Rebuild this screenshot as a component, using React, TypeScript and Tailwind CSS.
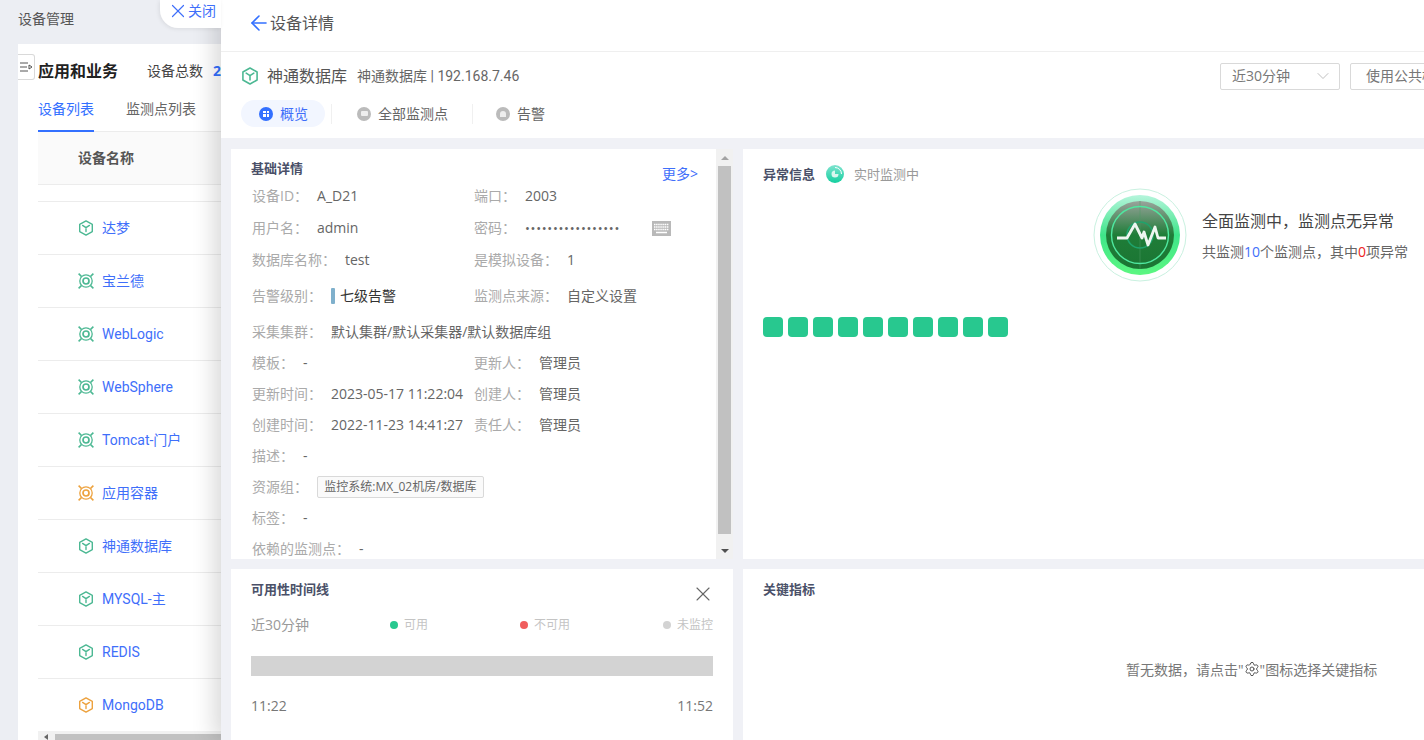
import { ArrowLeft, ChevronDown, Settings, X } from "lucide-react";

const DEVICES = [
  { name: "达梦", icon: "box", color: "#4cb893" },
  { name: "宝兰德", icon: "gear", color: "#4cb893" },
  { name: "WebLogic", icon: "gear", color: "#4cb893" },
  { name: "WebSphere", icon: "gear", color: "#4cb893" },
  { name: "Tomcat-门户", icon: "gear", color: "#4cb893" },
  { name: "应用容器", icon: "gear", color: "#eda23e" },
  { name: "神通数据库", icon: "box", color: "#4cb893" },
  { name: "MYSQL-主", icon: "box", color: "#4cb893" },
  { name: "REDIS", icon: "box", color: "#4cb893" },
  { name: "MongoDB", icon: "box", color: "#eda23e" },
];

function BoxIcon({ color, size = 16 }: { color: string; size?: number }) {
  return (
    <svg width={size} height={size} viewBox="0 0 16 16" fill="none" stroke={color} strokeWidth="1.4" className="shrink-0">
      <path d="M8 .9 14.3 4.4V11.6L8 15.1 1.7 11.6V4.4Z" strokeLinejoin="round" />
      <path d="M4.6 5.4 8 7.7l3.4-2.3M8 7.7v3.8" strokeLinecap="round" />
    </svg>
  );
}

function GearIcon({ color }: { color: string }) {
  return (
    <svg width="16" height="16" viewBox="0 0 16 16" fill="none" stroke={color} className="shrink-0">
      <circle cx="8" cy="8" r="6.2" strokeWidth="1.3" />
      <path d="M.6.6 3.4 3.4M15.4.6 12.6 3.4M.6 15.4 3.400 12.600M15.400 15.400 12.600 12.600" strokeWidth="1.500" />
      <circle cx="8" cy="8" r="3" strokeWidth="1.7" />
    </svg>
  );
}

function Radar() {
  return (
    <svg width="94" height="94" viewBox="0 0 94 94" className="shrink-0">
      <defs>
        <linearGradient id="disk" x1="0" y1="0" x2="0" y2="1">
          <stop offset="0" stopColor="#b5f5dc" />
          <stop offset="0.5" stopColor="#3fe58a" />
          <stop offset="1" stopColor="#5cf781" />
        </linearGradient>
        <linearGradient id="core" x1="0" y1="0" x2="0" y2="1">
          <stop offset="0" stopColor="#9aa39c" />
          <stop offset="0.5" stopColor="#1f7d38" />
          <stop offset="1" stopColor="#1b7533" />
        </linearGradient>
      </defs>
      <circle cx="47" cy="47" r="46" fill="#fff" stroke="#c9f1e0" />
      <circle cx="47" cy="47" r="40" fill="url(#disk)" />
      <circle cx="47" cy="47" r="34" fill="url(#core)" />
      <path d="M47 13v68" stroke="#4f9a66" strokeWidth="0.5" />
      <circle cx="47" cy="47" r="28.5" fill="none" stroke="#4fe8a0" strokeWidth="1.4" />
      <circle cx="47" cy="47" r="13" fill="none" stroke="#1fa36c" strokeWidth="1.6" />
      <path
        d="M24 50h10l8-14 7 14 2-6 4 13 7-18 3 11h8"
        fill="none"
        stroke="#eef6f0"
        strokeWidth="2.800"
        strokeLinejoin="round"
      />
    </svg>
  );
}

function Scanner() {
  return (
    <svg width="18" height="18" viewBox="0 0 18 18" className="shrink-0">
      <defs>
        <linearGradient id="scan" x1="0" y1="0" x2="0" y2="1">
          <stop offset="0" stopColor="#7fe3cf" />
          <stop offset="1" stopColor="#14cf9f" />
        </linearGradient>
      </defs>
      <circle cx="9" cy="9" r="9" fill="url(#scan)" />
      <path d="M9 5.500a3.500 3.500 0 1 0 3.500 3.500H9Z" fill="#d9f7ee" />
      <path d="M9 2.500a6.500 6.500 0 0 1 6.500 6.500" stroke="#fff" fill="none" strokeWidth="1" />
    </svg>
  );
}

function Keyboard() {
  return (
    <svg width="19" height="15" viewBox="0 0 19 15" className="shrink-0">
      <rect width="19" height="15" fill="#b9b9b9" />
      <path d="M2 3.500h15M2 6h15M2 8.500h15" stroke="#fff" strokeWidth="1.400" strokeDasharray="1.500 .6" />
      <path d="M4 11.500h11" stroke="#fff" strokeWidth="1.500" />
    </svg>
  );
}

function Field({ label, children, className = "" }: { label: string; children?: React.ReactNode; className?: string }) {
  return (
    <div className={`flex items-center ${className}`}>
      <span className="shrink-0 text-[#aaaaaa]">{label}：</span>
      <span className="ml-[9px] flex items-center whitespace-nowrap text-[#666666]">{children}</span>
    </div>
  );
}

function Row({ h, children }: { h: string; children: React.ReactNode }) {
  return <div className={`flex items-center ${h}`}>{children}</div>;
}

function TabDot({ color, children }: { color: string; children?: React.ReactNode }) {
  return (
    <span className={`flex size-[14px] items-center justify-center rounded-full ${color}`}>{children}</span>
  );
}

export default function App() {
  return (
    <div className="relative flex h-[740px] w-[1424px] overflow-hidden bg-[#eceef3] font-['Open_Sans','Noto_Sans_CJK_SC',sans-serif] text-sm text-[#666666]">
      <div className="flex h-full w-[221px] shrink-0 flex-col pl-[18px]">
        <div className="flex h-[44px] shrink-0 items-center pb-[6px] text-[#555555]">设备管理</div>
        <div className="relative flex min-h-0 flex-1 flex-col overflow-hidden bg-white pl-5">
          <div className="absolute left-0 top-[10px] flex h-[26px] w-[17px] items-center justify-center rounded-r-[3px] border border-l-0 border-[#d9d9d9] bg-white">
            <svg width="13" height="10" viewBox="0 0 13 10" fill="none" stroke="#555" strokeWidth="1">
              <path d="M0 1h8M0 5h7M0 9h8M9 3l3 2-3 2Z" />
            </svg>
          </div>
          <div className="flex h-[54px] shrink-0 items-center whitespace-nowrap">
            <span className="w-[111px] text-base font-bold text-[#222222]">应用和业务</span>
            <span className="text-[#444444]">设备总数</span>
            <span className="ml-[10px] font-bold text-[#3370ff]">2</span>
          </div>
          <div className="flex h-[34px] shrink-0 border-b border-[#ececec] pt-px whitespace-nowrap">
            <span className="h-[33px] border-b-2 border-[#3370ff] text-[#3370ff]">设备列表</span>
            <span className="ml-8 text-[#666666]">监测点列表</span>
          </div>
          <div className="flex h-[53px] shrink-0 items-center border-b border-[#ececec] bg-[#fafafa] pl-10 font-bold text-[#555555]">
            设备名称
          </div>
          <div className="h-[17px] shrink-0 border-b border-[#ececec]" />
          {DEVICES.map((d) => (
            <div key={d.name} className="flex h-[53px] shrink-0 items-center gap-2 border-b border-[#ececec] pl-10 font-['Roboto','Noto_Sans_CJK_SC',sans-serif] text-[#3f6ffa]">
              {d.icon === "box" ? <BoxIcon color={d.color} /> : <GearIcon color={d.color} />}
              <span className="whitespace-nowrap">{d.name}</span>
            </div>
          ))}
          <div className="absolute bottom-0 left-5 right-0 flex h-[9px] items-end bg-[#f1f1f1] pl-[17px]">
            <span className="absolute left-[6px] top-[3px] size-0 border-y-[3px] border-r-[4px] border-y-transparent border-r-[#666666]" />
            <div className="h-[6px] w-full bg-[#c1c1c1]" />
          </div>
        </div>
      </div>

      <div className="absolute left-[160px] top-0 z-20 flex h-[28px] w-[61px] items-center rounded-bl-[18px] bg-white pb-[6px] pl-[7px] whitespace-nowrap text-[#3f6ffa] shadow-[-1px_1px_4px_rgba(0,0,0,0.08)]">
        <X size={22} strokeWidth={1.3} className="shrink-0" />
        <span className="-ml-[1px]">关闭</span>
      </div>

      <div className="relative z-10 flex h-full w-[1250px] shrink-0 flex-col bg-[#f0f1f6] shadow-[-6px_0_22px_rgba(0,0,0,0.16)]">
        <div className="flex h-[52px] shrink-0 items-center border-b border-[#efefef] bg-white pb-[5px] pl-[26px] text-base text-[#555555]">
          <ArrowLeft size={24} strokeWidth={1.6} className="-mr-px text-[#3370ff]" />
          设备详情
        </div>

        <div className="h-[86px] shrink-0 bg-white pl-5 pr-[21px]">
          <div className="flex h-[48px] items-center">
            <BoxIcon color="#4cb893" size={18} />
            <span className="ml-2 text-base text-[#555555]">神通数据库</span>
            <span className="ml-[10px] font-['Roboto','Noto_Sans_CJK_SC',sans-serif] text-[#666666]">神通数据库 | 192.168.7.46</span>
            <div className="ml-auto flex h-[27px] w-[120px] items-center justify-between rounded-[2px] border border-[#d9d9d9] pl-[11px] pr-[6px] text-[#777777]">
              近30分钟
              <ChevronDown size={20} strokeWidth={0.9} className="text-[#aaaaaa]" />
            </div>
            <div className="ml-[10px] flex h-[27px] w-[100px] items-center whitespace-nowrap rounded-[2px] border border-[#d9d9d9] pl-[15px] text-[#777777]">
              使用公共模板
            </div>
          </div>
          <div className="flex h-[27px] items-center whitespace-nowrap">
            <div className="flex h-[27px] w-[84px] items-center gap-[7px] rounded-[14px] bg-[#f2f6ff] pl-[18px] text-[#3f6ffa]">
              <TabDot color="bg-[#3370ff]">
                <span className="grid size-[6px] grid-cols-2 gap-px">
                  <i className="bg-white" />
                  <i className="bg-white" />
                  <i className="bg-white" />
                  <i className="bg-white" />
                </span>
              </TabDot>
              概览
            </div>
            <span className="ml-[6px] h-5 w-px bg-[#f0f0f0]" />
            <div className="ml-[25px] flex items-center gap-[7px]">
              <TabDot color="bg-[#bbbbbb]">
                <span className="h-[5px] w-[7px] rounded-[1px] bg-[#eeeeee]" />
              </TabDot>
              全部监测点
            </div>
            <span className="ml-6 h-5 w-px bg-[#f0f0f0]" />
            <div className="ml-[23px] flex items-center gap-[7px]">
              <TabDot color="bg-[#bbbbbb]">
                <span className="size-[6px] rounded-t-full bg-[#eeeeee]" />
              </TabDot>
              告警
            </div>
          </div>
        </div>

        <div className="grid min-h-0 flex-1 grid-cols-[502px_1fr] grid-rows-[410px_1fr] gap-[10px] px-[10px] pt-[11px]">
          <div className="flex min-h-0 overflow-hidden bg-white">
            <div className="min-w-0 flex-1 pl-[21px]">
              <div className="-ml-px flex h-[31px] justify-between pr-[18px]">
                <span className="pt-[9px] text-[13px] leading-5 font-bold text-[#4a5068]">基础详情</span>
                <span className="pt-[15px] leading-5 text-[#3f6ffa]">更多&gt;</span>
              </div>
              <Row h="h-8">
                <Field label="设备ID" className="w-[222px]">A_D21</Field>
                <Field label="端口">2003</Field>
              </Row>
              <Row h="h-8">
                <Field label="用户名" className="w-[222px]">admin</Field>
                <Field label="密码">
                  <span className="w-[127px] text-[13px] tracking-[0.7px]">•••••••••••••••••</span>
                  <Keyboard />
                </Field>
              </Row>
              <Row h="h-8">
                <Field label="数据库名称" className="w-[222px]">test</Field>
                <Field label="是模拟设备">1</Field>
              </Row>
              <Row h="h-10">
                <Field label="告警级别" className="w-[222px]">
                  <span className="mr-[5px] h-4 w-1 rounded-[1px] bg-[#7fb0cc]" />
                  <span className="text-[#333333]">七级告警</span>
                </Field>
                <Field label="监测点来源">自定义设置</Field>
              </Row>
              <Row h="h-8">
                <Field label="采集集群">默认集群/默认采集器/默认数据库组</Field>
              </Row>
              <Row h="h-[30px]">
                <Field label="模板" className="w-[222px]">-</Field>
                <Field label="更新人">管理员</Field>
              </Row>
              <Row h="h-[31px]">
                <Field label="更新时间" className="w-[222px]">2023-05-17 11:22:04</Field>
                <Field label="创建人">管理员</Field>
              </Row>
              <Row h="h-[31px]">
                <Field label="创建时间" className="w-[222px]">2022-11-23 14:41:27</Field>
                <Field label="责任人">管理员</Field>
              </Row>
              <Row h="h-[31px]">
                <Field label="描述">-</Field>
              </Row>
              <Row h="h-[31px]">
                <Field label="资源组">
                  <span className="flex h-[22px] w-[167px] items-center justify-center rounded-[2px] border border-[#d9d9d9] bg-[#fafafa] text-xs text-[#666666]">
                    监控系统:MX_02机房/数据库
                  </span>
                </Field>
              </Row>
              <Row h="h-[31px]">
                <Field label="标签">-</Field>
              </Row>
              <Row h="h-[31px]">
                <Field label="依赖的监测点">-</Field>
              </Row>
            </div>
            <div className="flex h-full w-[17px] shrink-0 flex-col items-center bg-[#f1f1f1]">
              <div className="flex h-[17px] shrink-0 items-center justify-center">
                <span className="size-0 border-x-[4px] border-b-[4px] border-x-transparent border-b-[#a3a3a3]" />
              </div>
              <div className="h-[368px] w-[13px] shrink-0 bg-[#c1c1c1]" />
              <div className="flex flex-1 items-center justify-center pt-[8px]">
                <span className="size-0 border-x-[4px] border-t-[4px] border-x-transparent border-t-[#505050]" />
              </div>
            </div>
          </div>

          <div className="overflow-hidden bg-white pl-5">
            <div className="flex h-[50px] items-center text-[13px]">
              <span className="font-bold text-[#4a5068]">异常信息</span>
              <span className="ml-[11px]"><Scanner /></span>
              <span className="ml-[10px] text-[#999999]">实时监测中</span>
            </div>
            <div className="ml-[330px] flex h-[118px] items-start">
              <div className="-mt-[11px]">
                <Radar />
              </div>
              <div className="ml-[15px] whitespace-nowrap">
                <p className="mt-[10px] text-base leading-6 text-[#444444]">全面监测中，监测点无异常</p>
                <p className="mt-[9px] leading-5 text-[#666666]">
                  共监测<span className="text-[#3f6ffa]">10</span>个监测点，其中<span className="text-[#ee2222]">0</span>项异常
                </p>
              </div>
            </div>
            <div className="flex gap-[5px]">
              {Array.from({ length: 10 }, (_, i) => (
                <span key={i} className="size-5 rounded-[4px] bg-[#28c88f]" />
              ))}
            </div>
          </div>

          <div className="bg-white px-5 text-[#888888]">
            <div className="flex h-[50px] items-start justify-between">
              <span className="pt-[10px] text-[13px] leading-5 font-bold text-[#4a5068]">可用性时间线</span>
              <X size={24} strokeWidth={1.1} className="mt-[13px] -mr-[2px] text-[#666666]" />
            </div>
            <div className="flex h-[12px] items-center justify-between whitespace-nowrap">
              <span className="text-[#999999]">近30分钟</span>
              <span className="ml-[81px] flex items-center gap-[6px] text-xs text-[#c4c4c4]">
                <span className="size-2 rounded-full bg-[#28c88f]" />
                可用
              </span>
              <span className="ml-[92px] flex items-center gap-[6px] text-xs text-[#c4c4c4]">
                <span className="size-2 rounded-full bg-[#f05d5d]" />
                不可用
              </span>
              <span className="ml-auto flex items-center gap-[6px] text-xs text-[#c4c4c4]">
                <span className="size-2 rounded-full bg-[#d3d3d3]" />
                未监控
              </span>
            </div>
            <div className="mt-[25px] h-5 bg-[#d3d3d3]" />
            <div className="mt-[20px] flex justify-between leading-5 text-[#777777]">
              <span>11:22</span>
              <span>11:52</span>
            </div>
          </div>

          <div className="bg-white pl-5">
            <div className="pt-[10px] text-[13px] leading-5 font-bold text-[#4a5068]">关键指标</div>
            <div className="mt-[61px] ml-[363px] flex items-center whitespace-nowrap text-[#777777]">
              暂无数据，请点击"
              <Settings size={16} strokeWidth={1.5} className="mb-[2px] text-[#555555]" />
              "图标选择关键指标
            </div>
          </div>
        </div>
      </div>
    </div>
  );
}
